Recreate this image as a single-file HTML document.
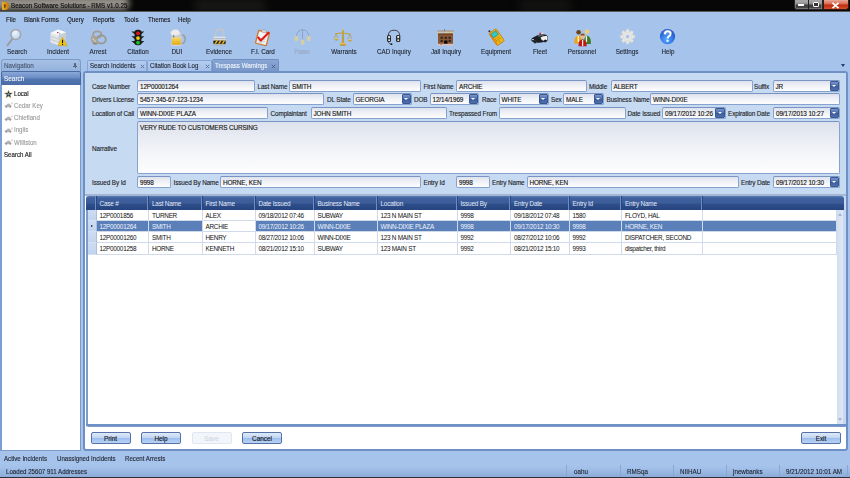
<!DOCTYPE html><html><head><meta charset="utf-8"><style>
*{box-sizing:border-box;margin:0;padding:0}
html,body{width:850px;height:478px;overflow:hidden;background:#a6c3eb;font-family:"Liberation Sans",sans-serif;font-size:6.4px;color:#1e1e1e;position:relative;-webkit-text-stroke-width:0.12px}
.a{position:absolute}
.t{position:absolute;white-space:nowrap;line-height:8px}
.tb{position:absolute;top:48px;width:60px;margin-left:-30px;text-align:center;font-size:6.7px;color:#1f2530;line-height:8px;white-space:nowrap;transform:scaleX(0.94)}
.ico{position:absolute;top:28px;width:20px;height:20px;margin-left:-10px}
.inp{position:absolute;height:11px;letter-spacing:-0.12px;border:1px solid #86a2cf;border-top-color:#7893c4;border-radius:2px;background:linear-gradient(#dde1ec,#e9ecf3 30%,#f6f7fa 70%,#fdfdfe);font-size:6.4px;line-height:11px;padding-left:2px;white-space:nowrap;overflow:hidden;color:#111}
.cb{position:absolute;right:0px;top:0px;width:9.5px;height:10px;background:linear-gradient(#7896cc,#4a6aa8 50%,#3a5a9a 51%,#4f70ae);border:1px solid #3a5890;border-radius:1px}
.cb:after{content:"";position:absolute;left:1.5px;top:3px;border-left:2.5px solid transparent;border-right:2.5px solid transparent;border-top:2.5px solid #fff}
.lbl{position:absolute;font-size:6.4px;letter-spacing:-0.12px;line-height:8px;white-space:nowrap;color:#1e1e1e}
.gh{position:absolute;top:0;height:14px;letter-spacing:-0.2px;-webkit-text-stroke-width:0;border-right:1px solid #274682;box-shadow:inset -1px 0 0 #6d8cc0;color:#e2ebf8;padding-left:3px;line-height:15.5px;font-size:6.4px;white-space:nowrap}
.gc{position:absolute;height:11px;letter-spacing:-0.28px;-webkit-text-stroke-width:0;border-right:1px solid #cfdaea;border-bottom:1px solid #cfdaea;padding-left:3px;line-height:12px;font-size:6.4px;white-space:nowrap;color:#111;overflow:hidden}
.btn{position:absolute;top:432px;height:12px;width:40px;border:1px solid #5572a8;border-radius:2px;background:linear-gradient(#dfeafa,#c3d6f3 45%,#9ebfee 55%,#b8d2f4);text-align:center;line-height:11.5px;font-size:6.4px;color:#111}
</style></head><body>
<div class="a" style="left:0;top:0;width:850px;height:12px;background:#070707;overflow:hidden"><div class="a" style="left:-12px;top:-4px;width:141px;height:14px;background:#94918a;filter:blur(3px);border-radius:5px"></div><div class="a" style="left:195px;top:0;width:70px;height:11px;background:#1c1d1a;filter:blur(4px);opacity:0.9"></div><div class="a" style="left:520px;top:0;width:50px;height:11px;background:#181916;filter:blur(4px);opacity:0.8"></div></div>
<div class="a" style="left:0;top:11px;width:850px;height:1px;background:#5a5a5a"></div>
<div class="a" style="left:1.5px;top:1.5px;width:7px;height:8.5px;background:linear-gradient(90deg,#f0b030,#c07808);border-radius:1px 4px 4px 1px"></div>
<div class="a" style="left:3.5px;top:3.5px;width:2.5px;height:4.5px;background:#7a4a08;border-radius:0 2px 2px 0"></div>
<div class="t" style="left:11px;top:1px;font-size:7px;line-height:9px;color:#0a0a0a;transform:scaleX(0.89);transform-origin:0 0">Beacon Software Solutions - RMS v1.0.25</div>
<div class="a" style="left:793.5px;top:0;width:29px;height:9.5px;background:linear-gradient(#b4b4b4,#8a8a8a 45%,#3c3c3c 55%,#4a4a4a);border:1px solid #262626;border-top:0;border-radius:0 0 0 3px;box-shadow:inset 0 0 0 0.6px #9a9a9a"></div>
<div class="a" style="left:807.8px;top:0;width:1px;height:9.5px;background:#202020"></div>
<div class="a" style="left:798px;top:4.2px;width:6px;height:2px;background:#fff;border-radius:0.5px"></div>
<div class="a" style="left:812.5px;top:2px;width:6px;height:5px;border:1.6px solid #fff;background:#333;border-radius:1px"></div>
<div class="a" style="left:822.5px;top:0;width:26px;height:9.5px;background:linear-gradient(#e8a898,#d86a50 45%,#c02c0c 55%,#d05030);border:1px solid #3a1a10;border-top:0;border-radius:0 0 3px 0"></div>
<svg class="a" style="left:831px;top:1.5px" width="9" height="7" viewBox="0 0 9 7"><path d="M1.5 0.8 L7.5 6.2 M7.5 0.8 L1.5 6.2" stroke="#fff" stroke-width="1.7"/></svg>
<div class="t" style="left:5.5px;top:15.6px;font-size:6.9px;color:#161616;transform:scaleX(0.9);transform-origin:0 0">File</div>
<div class="t" style="left:23.9px;top:15.6px;font-size:6.9px;color:#161616;transform:scaleX(0.9);transform-origin:0 0">Blank Forms</div>
<div class="t" style="left:66.6px;top:15.6px;font-size:6.9px;color:#161616;transform:scaleX(0.9);transform-origin:0 0">Query</div>
<div class="t" style="left:93px;top:15.6px;font-size:6.9px;color:#161616;transform:scaleX(0.9);transform-origin:0 0">Reports</div>
<div class="t" style="left:123.9px;top:15.6px;font-size:6.9px;color:#161616;transform:scaleX(0.9);transform-origin:0 0">Tools</div>
<div class="t" style="left:147.7px;top:15.6px;font-size:6.9px;color:#161616;transform:scaleX(0.9);transform-origin:0 0">Themes</div>
<div class="t" style="left:178.4px;top:15.6px;font-size:6.9px;color:#161616;transform:scaleX(0.9);transform-origin:0 0">Help</div>
<div class="tb" style="left:17px;color:#1f2530">Search</div>
<div class="tb" style="left:58px;color:#1f2530">Incident</div>
<div class="tb" style="left:98px;color:#1f2530">Arrest</div>
<div class="tb" style="left:137.7px;color:#1f2530">Citation</div>
<div class="tb" style="left:177px;color:#1f2530">DUI</div>
<div class="tb" style="left:218.5px;color:#1f2530">Evidence</div>
<div class="tb" style="left:262.5px;color:#1f2530">F.I. Card</div>
<div class="tb" style="left:302px;color:#98a8c0">Pawn</div>
<div class="tb" style="left:343.5px;color:#1f2530">Warrants</div>
<div class="tb" style="left:393.6px;color:#1f2530">CAD Inquiry</div>
<div class="tb" style="left:445.8px;color:#1f2530">Jail Inquiry</div>
<div class="tb" style="left:496px;color:#1f2530">Equipment</div>
<div class="tb" style="left:539.6px;color:#1f2530">Fleet</div>
<div class="tb" style="left:582px;color:#1f2530">Personnel</div>
<div class="tb" style="left:627.3px;color:#1f2530">Settings</div>
<div class="tb" style="left:667.5px;color:#1f2530">Help</div>
<svg class="a" style="left:0;top:0" width="850" height="60" viewBox="0 0 850 60">
<defs>
<radialGradient id="gl" cx="0.4" cy="0.35" r="0.7"><stop offset="0" stop-color="#eef6fd"/><stop offset="1" stop-color="#b5d0ee"/></radialGradient>
<radialGradient id="hb" cx="0.4" cy="0.3" r="0.75"><stop offset="0" stop-color="#6fb2ff"/><stop offset="0.6" stop-color="#2e74dc"/><stop offset="1" stop-color="#1a4fb0"/></radialGradient>
<linearGradient id="beer" x1="0" y1="0" x2="0" y2="1"><stop offset="0" stop-color="#f8d860"/><stop offset="1" stop-color="#e2a812"/></linearGradient>
<linearGradient id="lk" x1="0" y1="0" x2="0" y2="1"><stop offset="0" stop-color="#e8eaec"/><stop offset="1" stop-color="#a8adb2"/></linearGradient>
<linearGradient id="gold" x1="0" y1="0" x2="0" y2="1"><stop offset="0" stop-color="#f0d070"/><stop offset="1" stop-color="#b08418"/></linearGradient>
</defs>
<!-- Search magnifier -->
<line x1="12.5" y1="38.8" x2="7.4" y2="45.4" stroke="#9a9a9a" stroke-width="1.8" stroke-linecap="round"/>
<circle cx="15.8" cy="34.5" r="4.9" fill="url(#gl)" stroke="#a5a5a5" stroke-width="1.5"/>
<!-- Incident papers -->
<path d="M50.5 33 L58 29.6 L66 32.2 L66 42 L58.5 45.5 L50.5 42.5 Z" fill="#e4e6e8"/>
<path d="M50.5 33 L58 29.6 L66 32.2 L58.5 35.6 Z" fill="#f7f8f9"/>
<path d="M58.5 35.6 L66 32.2 L66 42 L58.5 45.5 Z" fill="#c9cdd2"/>
<path d="M51 36.5 L58.5 39.2 M51 39.5 L58.5 42.2" stroke="#b8bcc2" stroke-width="0.7"/>
<rect x="57" y="32" width="1.5" height="1.2" fill="#e03050"/>
<rect x="59" y="33.4" width="1.5" height="1" fill="#30c0a0"/>
<path d="M62.5 37.4 L67.2 45.6 L57.8 45.6 Z" fill="#f2c80c" stroke="#c89a00" stroke-width="0.5"/>
<rect x="62" y="39.8" width="1.1" height="3.4" fill="#111"/><rect x="62" y="44" width="1.1" height="1" fill="#111"/>
<!-- Arrest handcuffs -->
<ellipse cx="97.3" cy="34.6" rx="4.2" ry="3.2" fill="none" stroke="#a39e95" stroke-width="1.9"/>
<ellipse cx="101.3" cy="39.4" rx="4.5" ry="4" fill="none" stroke="#9b968d" stroke-width="1.8"/>
<path d="M90.6 37.5 Q91.5 34.8 93.8 34.6 L96.5 37.5 Q98.2 40.5 97.8 44 Q95.5 45.6 92.8 44.2 Q90.4 41 90.6 37.5 Z" fill="#aaa59c"/>
<path d="M92.5 38.5 L95.6 41.6" stroke="#e8e6e2" stroke-width="0.9"/>
<path d="M93.2 43.5 L96.8 43.8" stroke="#77736c" stroke-width="0.8"/>
<!-- Citation traffic light -->
<path d="M131.3 31.5 L135 31.5 L135 34.5 Z M131.3 36.3 L135 36.3 L135 39.3 Z M131.3 41 L135 41 L135 44 Z M144.4 31.5 L141 31.5 L141 34.5 Z M144.4 36.3 L141 36.3 L141 39.3 Z M144.4 41 L141 41 L141 44 Z" fill="#262626"/>
<rect x="134.6" y="29.7" width="6.8" height="15.5" rx="2.5" fill="#1a1a1a"/>
<circle cx="138" cy="33.3" r="1.9" fill="#e01818"/>
<circle cx="138" cy="38.1" r="1.9" fill="#ecd010"/>
<circle cx="138" cy="42.7" r="1.9" fill="#18c028"/>
<!-- DUI beer -->
<path d="M181.2 35 Q185.6 35 185.2 39.5 Q184.8 43.5 181.2 43.5" fill="none" stroke="#9c9fa3" stroke-width="1.6"/>
<rect x="171.2" y="32.5" width="10.3" height="13" rx="1.2" fill="#c9cdd3"/>
<rect x="171.8" y="37.5" width="9.1" height="7.6" rx="0.8" fill="url(#beer)"/>
<rect x="173" y="34" width="1.2" height="3.5" fill="#404850" opacity="0.6"/>
<path d="M170.8 34 Q170.2 31 172.6 30.6 Q173.6 29.2 176 29.6 Q178.6 29.4 179.2 31.4 Q180.6 32.6 179.4 34.6 Q176.5 36.2 174 35 Q171.6 35.8 170.8 34 Z" fill="#ececec" stroke="#d0d0d0" stroke-width="0.4"/>
<rect x="171.2" y="44.8" width="10.3" height="0.9" fill="#d8dadc"/>
<!-- Evidence padlock -->
<path d="M215.3 37.5 L215.3 33.8 Q215.3 29.2 219.5 29.2 Q223.7 29.2 223.7 33.8 L223.7 37.5" fill="none" stroke="#c2c5c8" stroke-width="1.7"/>
<rect x="213.4" y="36.8" width="12.2" height="8.8" rx="1" fill="url(#lk)"/>
<rect x="213.4" y="38.3" width="12.2" height="0.6" fill="#9aa0a6"/>
<rect x="213.4" y="40.6" width="12.2" height="3.2" fill="#1a1a1a"/>
<path d="M214.2 43.8 L216.4 40.6 L218.2 40.6 L216 43.8 Z M217.8 43.8 L220 40.6 L221.8 40.6 L219.6 43.8 Z M221.4 43.8 L223.6 40.6 L225.4 40.6 L223.2 43.8 Z" fill="#f0b818"/>
<!-- F.I. Card clipboard -->
<g transform="rotate(14 262.5 37.8)">
<rect x="256.3" y="30.8" width="12.4" height="14.4" rx="1.2" fill="#c97a30"/>
<rect x="257.6" y="32.2" width="9.8" height="11.8" fill="#f2f2f2"/>
<path d="M258.8 39 L266 39 M258.8 41 L266 41 M258.8 43 L264 43" stroke="#b8b8b8" stroke-width="0.6"/>
<rect x="260.2" y="29.8" width="4.6" height="2.6" rx="0.8" fill="#d8d8d8" stroke="#8a8a8a" stroke-width="0.4"/>
</g>
<path d="M257.8 36.8 L260.8 40.6 L269.2 32.2" fill="none" stroke="#e01818" stroke-width="2.1" stroke-linejoin="round"/>
<!-- Pawn -->
<path d="M296.4 36 Q297.4 29.8 302.6 29.8 Q307.8 29.8 308.8 36" fill="none" stroke="#8796b0" stroke-width="0.7"/>
<line x1="302.6" y1="29.8" x2="302.6" y2="39.5" stroke="#8796b0" stroke-width="0.7"/>
<ellipse cx="296.4" cy="38.4" rx="2" ry="2.7" fill="#d4d0a4"/>
<ellipse cx="308.8" cy="38.4" rx="2" ry="2.7" fill="#d4d0a4"/>
<ellipse cx="302.6" cy="42.2" rx="2" ry="2.7" fill="#d4d0a4"/>
<!-- Warrants scales -->
<path d="M342.3 30 L343.7 30 L344 43.2 L342 43.2 Z" fill="#c09a30"/>
<path d="M335.4 33.6 Q343 32 350.6 34.2" fill="none" stroke="#c8a030" stroke-width="1"/>
<circle cx="343" cy="29.6" r="0.9" fill="#e0c050"/>
<path d="M336 33.8 L334.2 38.6 M336 33.8 L338.2 38.6 M350 34.2 L347.8 39.6 M350 34.2 L352 39.6" stroke="#b08a28" stroke-width="0.5"/>
<path d="M333.8 38.4 L338.8 38.4 Q338.4 40.4 336.3 40.4 Q334.2 40.4 333.8 38.4 Z" fill="url(#gold)"/>
<path d="M347.4 39.4 L352.4 39.4 Q352 41.4 349.9 41.4 Q347.8 41.4 347.4 39.4 Z" fill="url(#gold)"/>
<ellipse cx="343" cy="44.4" rx="3.4" ry="1.3" fill="url(#gold)"/>
<rect x="341.2" y="42.4" width="3.6" height="1.2" fill="#d8b040"/>
<!-- CAD headset -->
<path d="M388.3 37 L388.3 35.5 Q388.6 30.2 394 30.2 Q399.4 30.2 399.7 35.5 L399.7 37" fill="none" stroke="#333" stroke-width="0.9"/>
<rect x="387" y="35" width="4" height="7" rx="1.6" fill="#2a2a2a"/>
<rect x="396" y="35" width="4.3" height="7" rx="1.6" fill="#2a2a2a"/>
<rect x="388.2" y="36" width="1.8" height="2.2" rx="0.6" fill="#f0f0f0"/><rect x="388.2" y="39.2" width="1.8" height="1.8" rx="0.6" fill="#e0e0e0"/>
<rect x="397.3" y="36" width="1.8" height="2.2" rx="0.6" fill="#f0f0f0"/><rect x="397.3" y="39.2" width="1.8" height="1.8" rx="0.6" fill="#e0e0e0"/>
<path d="M388.2 41.5 Q388.8 44.2 391.3 44.2" fill="none" stroke="#333" stroke-width="0.7"/>
<circle cx="391.5" cy="44.2" r="0.9" fill="#111"/>
<!-- Jail building -->
<rect x="438" y="33.5" width="15" height="10.5" fill="#8a5530"/>
<path d="M437.2 31.2 L441 31.2 L441 33.8 L437.2 33.8 Z M443.5 31.2 L449.5 31.2 L449.5 33.8 L443.5 33.8 Z M450 31.2 L453.9 31.2 L453.9 33.8 L450 33.8 Z" fill="#d8c6a0"/>
<path d="M437.2 31 L453.9 31" stroke="#a06a30" stroke-width="0.6"/>
<rect x="441" y="32" width="2.5" height="1.8" fill="#b0c8e8"/>
<rect x="444.3" y="29" width="0.6" height="2.2" fill="#606060"/>
<rect x="438" y="33.5" width="15" height="1" fill="#5a3418"/>
<g fill="#23262e"><rect x="440.6" y="36.8" width="2.2" height="2"/><rect x="444.7" y="36.8" width="2.2" height="2"/><rect x="448.6" y="36.8" width="2.2" height="2"/><rect x="440.6" y="40" width="2.2" height="2"/><rect x="448.6" y="40" width="2.2" height="2"/></g>
<rect x="444.2" y="40.5" width="3.2" height="4.2" fill="#050505"/>
<rect x="437.5" y="43.8" width="16" height="1.8" fill="#d4c4be"/>
<rect x="440.5" y="43.8" width="1.5" height="1" fill="#e05050"/>
<!-- Equipment -->
<g transform="rotate(-35 496.6 37.2)">
<rect x="492.2" y="29.8" width="8.8" height="14.8" rx="1.4" fill="#f0b818" stroke="#c07a08" stroke-width="0.8"/>
<rect x="492.2" y="30.5" width="1.6" height="13.4" fill="#e88a10"/>
<rect x="493.6" y="31.4" width="6" height="4.6" rx="0.5" fill="#30c8c8" stroke="#187070" stroke-width="0.5"/>
<g fill="#b88010"><rect x="494" y="37.8" width="1.3" height="1"/><rect x="496" y="37.8" width="1.3" height="1"/><rect x="498" y="37.8" width="1.3" height="1"/><rect x="494" y="39.8" width="1.3" height="1"/><rect x="496" y="39.8" width="1.3" height="1"/><rect x="498" y="39.8" width="1.3" height="1"/><rect x="496" y="41.8" width="1.3" height="1"/></g>
</g>
<circle cx="489.4" cy="31.2" r="1" fill="#2a2a2a"/>
<!-- Fleet police car -->
<path d="M531.3 40.6 Q531 38 533.5 37.2 L537 35.6 Q539.5 34 543 34.2 Q546.5 34.4 547.8 36.2 Q548.6 38.4 547.6 40.4 Q545 42.4 538 42.8 Q533 42.9 531.3 40.6 Z" fill="#1b1f24"/>
<path d="M540.5 37.4 Q543.5 35.6 547.2 36 Q548 38 547.2 40 L543 40.8 Q541 39.6 540.5 37.4 Z" fill="#f2f2f2"/>
<path d="M537.5 35.6 Q540 34.4 543 34.6 L544 36 Q540.5 36.2 538.5 37 Z" fill="#5a6068"/>
<rect x="539.4" y="32.8" width="2" height="1.3" fill="#e82020"/><rect x="541.4" y="32.8" width="1.8" height="1.3" fill="#f4f4f4"/>
<ellipse cx="533" cy="39.6" rx="1" ry="0.6" fill="#e8e8e0"/>
<circle cx="535" cy="42" r="1.3" fill="#0a0a0a" stroke="#6a6a6a" stroke-width="0.4"/>
<circle cx="545.2" cy="41" r="1.3" fill="#0a0a0a" stroke="#6a6a6a" stroke-width="0.4"/>
<!-- Personnel -->
<path d="M574.4 42.5 Q574.4 36.4 578.3 35.6 Q581.2 36 581.2 39.5 L581.2 43.5 L574.4 43.5 Z" fill="#eea012"/>
<rect x="577.6" y="36" width="1.4" height="6" fill="#fff4d0"/>
<circle cx="578.6" cy="32.2" r="2.3" fill="#6a4418"/>
<path d="M584 43 Q584 36.4 587 35.8 Q590.6 36.4 590.8 41.5 L590.8 44 L584 44 Z" fill="#3a7a20"/>
<rect x="585.8" y="36.2" width="1.3" height="6" fill="#f4f4e8"/>
<circle cx="587" cy="31.6" r="2.3" fill="#f0cc78"/>
<path d="M578.4 46.2 Q578.4 39.8 582.6 39.2 Q586.8 39.8 586.8 46.2 Z" fill="#c01818"/>
<rect x="582" y="40" width="1.2" height="6" fill="#f2f2f2"/>
<circle cx="582.6" cy="36.2" r="2.3" fill="#f0b890"/>
<path d="M580.3 35.6 Q580.3 33.6 582.6 33.6 Q584.9 33.6 584.9 35.6 Z" fill="#8a5010"/>
<!-- Settings gear -->
<g transform="translate(627.6 36.6)">
<path d="M-1.35 -5.43 L-1.30 -7.28 L1.30 -7.28 L1.35 -5.43 L2.89 -4.80 L4.23 -6.07 L6.07 -4.23 L4.80 -2.89 L5.43 -1.35 L7.28 -1.30 L7.28 1.30 L5.43 1.35 L4.80 2.89 L6.07 4.23 L4.23 6.07 L2.89 4.80 L1.35 5.43 L1.30 7.28 L-1.30 7.28 L-1.35 5.43 L-2.89 4.80 L-4.23 6.07 L-6.07 4.23 L-4.80 2.89 L-5.43 1.35 L-7.28 1.30 L-7.28 -1.30 L-5.43 -1.35 L-4.80 -2.89 L-6.07 -4.23 L-4.23 -6.07 L-2.89 -4.80 Z" fill="#e6e6e4" stroke="#d4d4d0" stroke-width="0.5"/>
<circle r="4.2" fill="none" stroke="#d8d8d4" stroke-width="0.6"/>
<circle r="1.8" fill="#a8c4ec"/>
</g>
<!-- Help -->
<radialGradient id="hb2" cx="0.45" cy="0.7" r="0.7"><stop offset="0" stop-color="#5aa8ff"/><stop offset="0.55" stop-color="#3278e6"/><stop offset="1" stop-color="#1c4eb8"/></radialGradient>
<circle cx="667.5" cy="36.6" r="7.6" fill="url(#hb2)"/>
<ellipse cx="667.5" cy="32.6" rx="4.6" ry="2.8" fill="#fff" opacity="0.18"/>
<path d="M664.9 34.2 Q664.9 31.2 667.8 31.2 Q670.6 31.2 670.6 33.8 Q670.6 35.5 668.8 36.4 Q667.6 37 667.6 38.6" fill="none" stroke="#fff" stroke-width="1.9"/>
<rect x="666.6" y="39.8" width="2" height="2" fill="#fff"/>
</svg>

<div class="a" style="left:1px;top:59px;width:80px;height:13px;background:linear-gradient(#a6c0e6,#93b1dc);border:1px solid #7c9bc9;border-bottom:0;border-radius:3px 3px 0 0"></div>
<div class="t" style="left:4px;top:62px;font-size:6.8px;color:#4a5670;transform:scaleX(0.93);transform-origin:0 0">Navigation</div>
<div class="a" style="left:73.8px;top:63px;width:2.4px;height:3.2px;background:#56647e;border-radius:0.5px"></div>
<div class="a" style="left:73px;top:66px;width:4px;height:0.8px;background:#56647e"></div>
<div class="a" style="left:74.6px;top:66.5px;width:0.8px;height:1.8px;background:#56647e"></div>
<div class="a" style="left:1px;top:71px;width:79.5px;height:14.5px;background:linear-gradient(#8aa8d8,#6a8cc4 45%,#5276b0 55%,#4a6ba6);border:1px solid #4a6aa2;border-radius:2px 2px 0 0"></div>
<div class="t" style="left:3.5px;top:75.3px;font-size:6.9px;color:#f4f7fc;transform:scaleX(0.93);transform-origin:0 0">Search</div>
<div class="a" style="left:0px;top:85px;width:81px;height:366px;background:#fff;border:1px solid #7c9bc9;border-left:2px solid #7a9fd4;border-top:0;border-bottom:1.5px solid #7c9bc9"></div>
<div class="t" style="left:13.8px;top:89.6px;font-size:6.8px;color:#111;transform:scaleX(0.9);transform-origin:0 0">Local</div>
<div class="t" style="left:13.8px;top:102.0px;font-size:6.8px;color:#9a9a9a;transform:scaleX(0.9);transform-origin:0 0">Cedar Key</div>
<div class="t" style="left:13.8px;top:114.19999999999999px;font-size:6.8px;color:#9a9a9a;transform:scaleX(0.9);transform-origin:0 0">Chiefland</div>
<div class="t" style="left:13.8px;top:126.4px;font-size:6.8px;color:#9a9a9a;transform:scaleX(0.9);transform-origin:0 0">Inglis</div>
<div class="t" style="left:13.8px;top:138.6px;font-size:6.8px;color:#9a9a9a;transform:scaleX(0.9);transform-origin:0 0">Williston</div>
<div class="t" style="left:3.9px;top:150.6px;font-size:6.8px;color:#111;transform:scaleX(0.9);transform-origin:0 0">Search All</div>
<svg class="a" style="left:3.6px;top:89.6px" width="9" height="8" viewBox="0 0 9 8"><path d="M4.5 0.3 L5.5 2.9 L8.5 3 L6.1 4.8 L6.9 7.7 L4.5 6.1 L2.1 7.7 L2.9 4.8 L0.5 3 L3.5 2.9 Z" fill="#1e1e12" stroke="#b0a050" stroke-width="0.45"/><circle cx="4.5" cy="4.3" r="1.2" fill="#6a9ac8"/></svg>
<svg class="a" style="left:4px;top:102.4px" width="9" height="6" viewBox="0 0 9 6"><path d="M0.6 4.6 Q0.8 3 2.6 2.8 L3.8 1.6 L5.8 1.8 L6.6 3 Q7.6 3.2 7.6 4.4 L7.2 5 L1 5.2 Z" fill="#b4b4b4"/><circle cx="2.4" cy="5" r="0.8" fill="#8a8a8a"/><circle cx="6.2" cy="5" r="0.8" fill="#8a8a8a"/><rect x="7.4" y="0.6" width="1.2" height="1.6" fill="#c0c0c0"/></svg>
<svg class="a" style="left:4px;top:114.6px" width="9" height="6" viewBox="0 0 9 6"><path d="M0.6 4.6 Q0.8 3 2.6 2.8 L3.8 1.6 L5.8 1.8 L6.6 3 Q7.6 3.2 7.6 4.4 L7.2 5 L1 5.2 Z" fill="#b4b4b4"/><circle cx="2.4" cy="5" r="0.8" fill="#8a8a8a"/><circle cx="6.2" cy="5" r="0.8" fill="#8a8a8a"/><rect x="7.4" y="0.6" width="1.2" height="1.6" fill="#c0c0c0"/></svg>
<svg class="a" style="left:4px;top:126.80000000000001px" width="9" height="6" viewBox="0 0 9 6"><path d="M0.6 4.6 Q0.8 3 2.6 2.8 L3.8 1.6 L5.8 1.8 L6.6 3 Q7.6 3.2 7.6 4.4 L7.2 5 L1 5.2 Z" fill="#b4b4b4"/><circle cx="2.4" cy="5" r="0.8" fill="#8a8a8a"/><circle cx="6.2" cy="5" r="0.8" fill="#8a8a8a"/><rect x="7.4" y="0.6" width="1.2" height="1.6" fill="#c0c0c0"/></svg>
<svg class="a" style="left:4px;top:139px" width="9" height="6" viewBox="0 0 9 6"><path d="M0.6 4.6 Q0.8 3 2.6 2.8 L3.8 1.6 L5.8 1.8 L6.6 3 Q7.6 3.2 7.6 4.4 L7.2 5 L1 5.2 Z" fill="#b4b4b4"/><circle cx="2.4" cy="5" r="0.8" fill="#8a8a8a"/><circle cx="6.2" cy="5" r="0.8" fill="#8a8a8a"/><rect x="7.4" y="0.6" width="1.2" height="1.6" fill="#c0c0c0"/></svg>
<div class="a" style="left:87px;top:60px;width:60px;height:12px;background:linear-gradient(#b3ccef,#a2bee8);border:1px solid #86a5d3;border-bottom:0;border-radius:2px 2px 0 0"></div>
<div class="t" style="left:90px;top:62px;font-size:6.8px;color:#1e2430;transform:scaleX(0.9);transform-origin:0 0">Search Incidents</div>
<svg class="a" style="left:140px;top:63.5px" width="5" height="5" viewBox="0 0 5 5"><path d="M0.8 0.8 L4.2 4.2 M4.2 0.8 L0.8 4.2" stroke="#5c6e90" stroke-width="0.9"/></svg>
<div class="a" style="left:147px;top:60px;width:65px;height:12px;background:linear-gradient(#b3ccef,#a2bee8);border:1px solid #86a5d3;border-bottom:0;border-radius:2px 2px 0 0"></div>
<div class="t" style="left:150px;top:62px;font-size:6.8px;color:#1e2430;transform:scaleX(0.9);transform-origin:0 0">Citation Book Log</div>
<svg class="a" style="left:204.5px;top:63.5px" width="5" height="5" viewBox="0 0 5 5"><path d="M0.8 0.8 L4.2 4.2 M4.2 0.8 L0.8 4.2" stroke="#5c6e90" stroke-width="0.9"/></svg>
<div class="a" style="left:212px;top:59px;width:67px;height:13px;background:linear-gradient(#88a6d3,#7796c8);border:1px solid #6f8fc2;border-bottom:0;border-radius:2px 2px 0 0"></div>
<div class="t" style="left:215px;top:62px;font-size:6.8px;color:#f0f4fb;transform:scaleX(0.9);transform-origin:0 0">Trespass Warnings</div>
<svg class="a" style="left:270.5px;top:63.5px" width="5" height="5" viewBox="0 0 5 5"><path d="M0.8 0.8 L4.2 4.2 M4.2 0.8 L0.8 4.2" stroke="#4a5c86" stroke-width="0.9"/></svg>
<div class="a" style="left:840.8px;top:63.8px;border-left:2.7px solid transparent;border-right:2.7px solid transparent;border-top:3px solid #1f3c7a"></div>
<div class="a" style="left:83px;top:71px;width:765px;height:380px;background:#fff;border:2px solid #6f90c4;border-radius:3px"></div>
<div class="a" style="left:85px;top:73px;width:761px;height:121.5px;background:#c6daf2"></div>
<div class="a" style="left:85px;top:194px;width:761px;height:1.6px;background:#a4b6d4"></div>
<div class="lbl" style="left:92px;top:82.8px">Case Number</div>
<div class="inp" style="left:137px;top:80px;width:118px;height:12px">12P00001264</div>
<div class="lbl" style="left:257.5px;top:82.8px">Last Name</div>
<div class="inp" style="left:289px;top:80px;width:132px;height:12px">SMITH</div>
<div class="lbl" style="left:423.5px;top:82.8px">First Name</div>
<div class="inp" style="left:456px;top:80px;width:130.5px;height:12px">ARCHIE</div>
<div class="lbl" style="left:589px;top:82.8px">Middle</div>
<div class="inp" style="left:610.5px;top:80px;width:142.0px;height:12px">ALBERT</div>
<div class="lbl" style="left:754px;top:82.8px">Suffix</div>
<div class="inp" style="left:772.5px;top:80px;width:67.5px;height:12px">JR<div class="cb"></div></div>
<div class="lbl" style="left:92px;top:95.8px">Drivers License</div>
<div class="inp" style="left:137px;top:93px;width:187px;height:12px">5457-345-67-123-1234</div>
<div class="lbl" style="left:327px;top:95.8px">DL State</div>
<div class="inp" style="left:352.5px;top:93px;width:59.5px;height:12px">GEORGIA<div class="cb"></div></div>
<div class="lbl" style="left:414px;top:95.8px">DOB</div>
<div class="inp" style="left:429.5px;top:93px;width:49.5px;height:12px">12/14/1969<div class="cb"></div></div>
<div class="lbl" style="left:482px;top:95.8px">Race</div>
<div class="inp" style="left:498.5px;top:93px;width:50.5px;height:12px">WHITE<div class="cb"></div></div>
<div class="lbl" style="left:551px;top:95.8px">Sex</div>
<div class="inp" style="left:563px;top:93px;width:41px;height:12px">MALE<div class="cb"></div></div>
<div class="lbl" style="left:606.5px;top:95.8px">Business Name</div>
<div class="inp" style="left:650px;top:93px;width:190px;height:12px">WINN-DIXIE</div>
<div class="lbl" style="left:92px;top:109.8px">Location of Call</div>
<div class="inp" style="left:137px;top:107px;width:131px;height:12px">WINN-DIXIE PLAZA</div>
<div class="lbl" style="left:270.5px;top:109.8px">Complaintant</div>
<div class="inp" style="left:310.5px;top:107px;width:136.5px;height:12px">JOHN SMITH</div>
<div class="lbl" style="left:449px;top:109.8px">Trespassed From</div>
<div class="inp" style="left:499px;top:107px;width:126.5px;height:12px"></div>
<div class="lbl" style="left:627.5px;top:109.8px">Date Issued</div>
<div class="inp" style="left:662px;top:107px;width:63.5px;height:12px">09/17/2012 10:26<div class="cb"></div></div>
<div class="lbl" style="left:728px;top:109.8px">Expiration Date</div>
<div class="inp" style="left:773px;top:107px;width:67px;height:12px">09/17/2013 10:27<div class="cb"></div></div>
<div class="inp" style="left:137px;top:121px;width:703px;height:53px;line-height:11px;padding-top:0px">VERY RUDE TO CUSTOMERS CURSING</div>
<div class="lbl" style="left:92px;top:145px">Narrative</div>
<div class="lbl" style="left:92px;top:178.8px">Issued By Id</div>
<div class="inp" style="left:137px;top:176px;width:34px;height:12px">9998</div>
<div class="lbl" style="left:173.5px;top:178.8px">Issued By Name</div>
<div class="inp" style="left:220px;top:176px;width:201px;height:12px">HORNE, KEN</div>
<div class="lbl" style="left:423.5px;top:178.8px">Entry Id</div>
<div class="inp" style="left:456px;top:176px;width:33.5px;height:12px">9998</div>
<div class="lbl" style="left:492px;top:178.8px">Entry Name</div>
<div class="inp" style="left:526.5px;top:176px;width:212.5px;height:12px">HORNE, KEN</div>
<div class="lbl" style="left:741px;top:178.8px">Entry Date</div>
<div class="inp" style="left:773px;top:176px;width:67px;height:12px">09/17/2012 10:30<div class="cb"></div></div>
<div class="a" style="left:86px;top:195.5px;width:760px;height:231px;background:#fff;border:2px solid #7d9bcc;border-right:0;border-top:0;border-radius:0 0 0 3px"></div>
<div class="a" style="left:838px;top:195.5px;width:8px;height:229px;background:#c5d8f0"></div>
<div class="a" style="left:86px;top:195.5px;width:6px;height:5px;background:#c5d8f0"></div>
<div class="a" style="left:86px;top:195.5px;width:758px;height:14.2px;background:linear-gradient(#5a7cb6,#3f619e 15%,#3b5c98 50%,#2e4e8a 60%,#26447e);border-radius:3px 3px 0 0"></div>
<div class="a" style="left:87px;top:195.5px;width:750px;height:14px">
<div class="gh" style="left:0;width:9.5px"></div>
<div class="gh" style="left:9.5px;width:52.5px">Case #</div>
<div class="gh" style="left:62px;width:53.5px">Last Name</div>
<div class="gh" style="left:115.5px;width:53.0px">First Name</div>
<div class="gh" style="left:168.5px;width:59.0px">Date Issued</div>
<div class="gh" style="left:227.5px;width:63.0px">Business Name</div>
<div class="gh" style="left:290.5px;width:80.0px">Location</div>
<div class="gh" style="left:370.5px;width:53.5px">Issued By</div>
<div class="gh" style="left:424px;width:58.5px">Entry Date</div>
<div class="gh" style="left:482.5px;width:52.5px">Entry Id</div>
<div class="gh" style="left:535px;width:80.5px">Entry Name</div>
<div class="gh" style="left:615.5px;width:141.39999999999998px;border-right:0;box-shadow:none"></div>
</div>
<div class="a" style="left:88px;top:209.8px;width:8.5px;height:11.399999999999977px;background:linear-gradient(#cddcf2,#c2d5ee);border-bottom:1px solid #d4e1f3;border-right:1px solid #a9c0e0"></div>
<div class="gc" style="left:96.5px;top:209.8px;width:52.5px;height:11.399999999999977px;background:#fff;color:#111">12P0001856</div>
<div class="gc" style="left:149px;top:209.8px;width:53.5px;height:11.399999999999977px;background:#fff;color:#111">TURNER</div>
<div class="gc" style="left:202.5px;top:209.8px;width:53.0px;height:11.399999999999977px;background:#fff;color:#111">ALEX</div>
<div class="gc" style="left:255.5px;top:209.8px;width:59.0px;height:11.399999999999977px;background:#fff;color:#111">09/18/2012 07:46</div>
<div class="gc" style="left:314.5px;top:209.8px;width:63.0px;height:11.399999999999977px;background:#fff;color:#111">SUBWAY</div>
<div class="gc" style="left:377.5px;top:209.8px;width:80.0px;height:11.399999999999977px;background:#fff;color:#111">123 N MAIN ST</div>
<div class="gc" style="left:457.5px;top:209.8px;width:53.5px;height:11.399999999999977px;background:#fff;color:#111">9998</div>
<div class="gc" style="left:511px;top:209.8px;width:58.5px;height:11.399999999999977px;background:#fff;color:#111">09/18/2012 07:48</div>
<div class="gc" style="left:569.5px;top:209.8px;width:52.5px;height:11.399999999999977px;background:#fff;color:#111">1580</div>
<div class="gc" style="left:622px;top:209.8px;width:80.5px;height:11.399999999999977px;background:#fff;color:#111">FLOYD, HAL</div>
<div class="gc" style="left:702.5px;top:209.8px;width:134.70000000000005px;height:11.399999999999977px;background:#fff"></div>
<div class="a" style="left:88px;top:221.2px;width:8.5px;height:11.0px;background:linear-gradient(#cddcf2,#c2d5ee);border-bottom:1px solid #d4e1f3;border-right:1px solid #a9c0e0"></div>
<div class="a" style="left:91px;top:224.79999999999998px;border-top:1.8px solid transparent;border-bottom:1.8px solid transparent;border-left:2.2px solid #101830"></div>
<div class="gc" style="left:96.5px;top:221.2px;width:52.5px;height:11.0px;background:#5b7fb9;color:#eef3fb">12P00001264</div>
<div class="gc" style="left:149px;top:221.2px;width:53.5px;height:11.0px;background:#5b7fb9;color:#eef3fb">SMITH</div>
<div class="gc" style="left:202.5px;top:221.2px;width:53.0px;height:11.0px;background:#fff;color:#111">ARCHIE</div>
<div class="gc" style="left:255.5px;top:221.2px;width:59.0px;height:11.0px;background:#5b7fb9;color:#eef3fb">09/17/2012 10:26</div>
<div class="gc" style="left:314.5px;top:221.2px;width:63.0px;height:11.0px;background:#5b7fb9;color:#eef3fb">WINN-DIXIE</div>
<div class="gc" style="left:377.5px;top:221.2px;width:80.0px;height:11.0px;background:#5b7fb9;color:#eef3fb">WINN-DIXIE PLAZA</div>
<div class="gc" style="left:457.5px;top:221.2px;width:53.5px;height:11.0px;background:#5b7fb9;color:#eef3fb">9998</div>
<div class="gc" style="left:511px;top:221.2px;width:58.5px;height:11.0px;background:#5b7fb9;color:#eef3fb">09/17/2012 10:30</div>
<div class="gc" style="left:569.5px;top:221.2px;width:52.5px;height:11.0px;background:#5b7fb9;color:#eef3fb">9998</div>
<div class="gc" style="left:622px;top:221.2px;width:80.5px;height:11.0px;background:#5b7fb9;color:#eef3fb">HORNE, KEN</div>
<div class="gc" style="left:702.5px;top:221.2px;width:134.70000000000005px;height:11.0px;background:#5b7fb9"></div>
<div class="a" style="left:88px;top:232.2px;width:8.5px;height:11.200000000000017px;background:linear-gradient(#cddcf2,#c2d5ee);border-bottom:1px solid #d4e1f3;border-right:1px solid #a9c0e0"></div>
<div class="gc" style="left:96.5px;top:232.2px;width:52.5px;height:11.200000000000017px;background:#fff;color:#111">12P00001260</div>
<div class="gc" style="left:149px;top:232.2px;width:53.5px;height:11.200000000000017px;background:#fff;color:#111">SMITH</div>
<div class="gc" style="left:202.5px;top:232.2px;width:53.0px;height:11.200000000000017px;background:#fff;color:#111">HENRY</div>
<div class="gc" style="left:255.5px;top:232.2px;width:59.0px;height:11.200000000000017px;background:#fff;color:#111">08/27/2012 10:06</div>
<div class="gc" style="left:314.5px;top:232.2px;width:63.0px;height:11.200000000000017px;background:#fff;color:#111">WINN-DIXIE</div>
<div class="gc" style="left:377.5px;top:232.2px;width:80.0px;height:11.200000000000017px;background:#fff;color:#111">123 N MAIN ST</div>
<div class="gc" style="left:457.5px;top:232.2px;width:53.5px;height:11.200000000000017px;background:#fff;color:#111">9992</div>
<div class="gc" style="left:511px;top:232.2px;width:58.5px;height:11.200000000000017px;background:#fff;color:#111">08/27/2012 10:06</div>
<div class="gc" style="left:569.5px;top:232.2px;width:52.5px;height:11.200000000000017px;background:#fff;color:#111">9992</div>
<div class="gc" style="left:622px;top:232.2px;width:80.5px;height:11.200000000000017px;background:#fff;color:#111">DISPATCHER, SECOND</div>
<div class="gc" style="left:702.5px;top:232.2px;width:134.70000000000005px;height:11.200000000000017px;background:#fff"></div>
<div class="a" style="left:88px;top:243.4px;width:8.5px;height:11.199999999999989px;background:linear-gradient(#cddcf2,#c2d5ee);border-bottom:1px solid #d4e1f3;border-right:1px solid #a9c0e0"></div>
<div class="gc" style="left:96.5px;top:243.4px;width:52.5px;height:11.199999999999989px;background:#fff;color:#111">12P00001258</div>
<div class="gc" style="left:149px;top:243.4px;width:53.5px;height:11.199999999999989px;background:#fff;color:#111">HORNE</div>
<div class="gc" style="left:202.5px;top:243.4px;width:53.0px;height:11.199999999999989px;background:#fff;color:#111">KENNETH</div>
<div class="gc" style="left:255.5px;top:243.4px;width:59.0px;height:11.199999999999989px;background:#fff;color:#111">08/21/2012 15:10</div>
<div class="gc" style="left:314.5px;top:243.4px;width:63.0px;height:11.199999999999989px;background:#fff;color:#111">SUBWAY</div>
<div class="gc" style="left:377.5px;top:243.4px;width:80.0px;height:11.199999999999989px;background:#fff;color:#111">123 MAIN ST</div>
<div class="gc" style="left:457.5px;top:243.4px;width:53.5px;height:11.199999999999989px;background:#fff;color:#111">9992</div>
<div class="gc" style="left:511px;top:243.4px;width:58.5px;height:11.199999999999989px;background:#fff;color:#111">08/21/2012 15:10</div>
<div class="gc" style="left:569.5px;top:243.4px;width:52.5px;height:11.199999999999989px;background:#fff;color:#111">9993</div>
<div class="gc" style="left:622px;top:243.4px;width:80.5px;height:11.199999999999989px;background:#fff;color:#111">dispatcher, third</div>
<div class="gc" style="left:702.5px;top:243.4px;width:134.70000000000005px;height:11.199999999999989px;background:#fff"></div>
<div class="a" style="left:837.2px;top:209.7px;width:6px;height:215px;background:linear-gradient(90deg,#d2def0,#dfe8f5);"></div>
<div class="a" style="left:838.2px;top:213px;border-left:2px solid transparent;border-right:2px solid transparent;border-bottom:3px solid #a3b5d0"></div>
<div class="a" style="left:838.2px;top:418px;border-left:2px solid transparent;border-right:2px solid transparent;border-top:3px solid #a3b5d0"></div>
<div class="a" style="left:86px;top:424px;width:760px;height:2px;background:#6f90c6"></div>
<div class="btn" style="left:90.5px">Print</div>
<div class="btn" style="left:141px">Help</div>
<div class="btn" style="left:242px">Cancel</div>
<div class="btn" style="left:191.5px;background:#f2f6fb;border-color:#dde6f2;color:#d0d8e4">Save</div>
<div class="btn" style="left:801.3px;width:39.4px">Exit</div>
<div class="t" style="left:4px;top:454.5px;font-size:6.6px;color:#1e2430;transform:scaleX(0.93);transform-origin:0 0">Active Incidents</div>
<div class="t" style="left:57px;top:454.5px;font-size:6.6px;color:#1e2430;transform:scaleX(0.93);transform-origin:0 0">Unassigned Incidents</div>
<div class="t" style="left:125px;top:454.5px;font-size:6.6px;color:#1e2430;transform:scaleX(0.93);transform-origin:0 0">Recent Arrests</div>
<div class="a" style="left:0;top:463px;width:850px;height:14px;background:linear-gradient(#a8c5ec,#a2c0e9 35%,#8cacd9)"></div>
<div class="t" style="left:6.4px;top:467.5px;font-size:6.6px;color:#1e2430;transform:scaleX(0.93);transform-origin:0 0">Loaded 25607 911 Addresses</div>
<div class="a" style="left:566px;top:465px;width:1px;height:11px;background:#8aa6cf"></div>
<div class="a" style="left:619.5px;top:465px;width:1px;height:11px;background:#8aa6cf"></div>
<div class="a" style="left:672.5px;top:465px;width:1px;height:11px;background:#8aa6cf"></div>
<div class="a" style="left:725.5px;top:465px;width:1px;height:11px;background:#8aa6cf"></div>
<div class="a" style="left:778.5px;top:465px;width:1px;height:11px;background:#8aa6cf"></div>
<div class="a" style="left:846.5px;top:465px;width:1px;height:11px;background:#8aa6cf"></div>
<div class="t" style="left:574px;top:467.5px;font-size:6.6px;color:#1e2430;transform:scaleX(0.95);transform-origin:0 0">oahu</div>
<div class="t" style="left:627px;top:467.5px;font-size:6.6px;color:#1e2430;transform:scaleX(0.95);transform-origin:0 0">RMSqa</div>
<div class="t" style="left:680px;top:467.5px;font-size:6.6px;color:#1e2430;transform:scaleX(0.95);transform-origin:0 0">NIIHAU</div>
<div class="t" style="left:733px;top:467.5px;font-size:6.6px;color:#1e2430;transform:scaleX(0.95);transform-origin:0 0">jnewbanks</div>
<div class="t" style="left:786px;top:467.5px;font-size:6.6px;color:#1e2430;transform:scaleX(0.95);transform-origin:0 0">9/21/2012 10:01 AM</div>
<div class="a" style="left:0;top:476.5px;width:850px;height:1.5px;background:#2e3038"></div>
</body></html>
